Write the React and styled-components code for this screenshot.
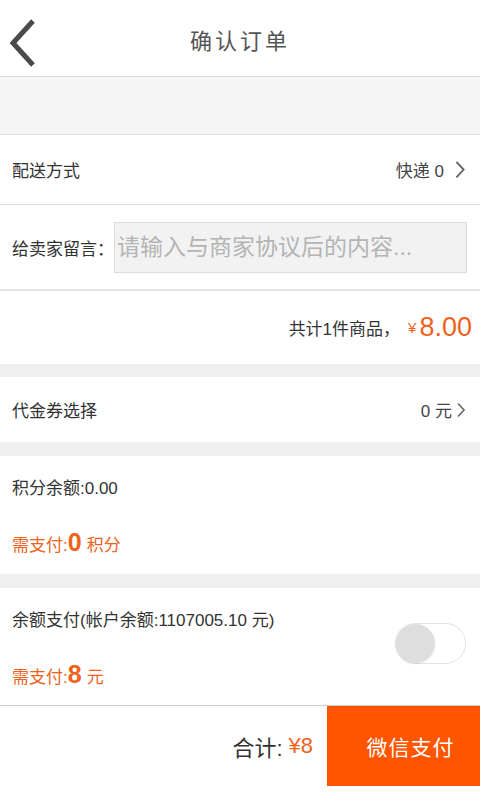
import React from 'react'
import styled, { createGlobalStyle } from 'styled-components'

const GlobalStyle = createGlobalStyle`
	html, body {
		margin: 0;
		padding: 0;
		background: #fff;
	}
	body {
		font-family: "Liberation Sans", "Noto Sans CJK SC", sans-serif;
		color: #333;
	}
`

const orange = '#ee621c'

const Page = styled.div`
	width: 480px;
	min-height: 800px;
	display: flex;
	flex-direction: column;
	background: #fff;
`

const Header = styled.div`
	height: 76px;
	display: flex;
	align-items: center;
	justify-content: center;
	position: relative;
	border-bottom: 1px solid #d6d6d6;
`

const Back = styled.svg`
	position: absolute;
	left: 8px;
	top: 18px;
`

const Title = styled.h1`
	margin: 0;
	font-size: 22px;
	font-weight: normal;
	color: #555;
	letter-spacing: 3px;
	padding-top: 2px;
`

const Blank = styled.div`
	height: 57px;
	background: #f5f5f5;
	border-bottom: 1px solid #ddd;
`

const Row = styled.div`
	height: ${(p) => p.h}px;
	display: flex;
	align-items: center;
	justify-content: ${(p) => (p.end ? 'flex-end' : 'space-between')};
	padding: 0 ${(p) => (p.pr != null ? p.pr : 14)}px 0 12px;
	border-bottom: ${(p) => p.line || 'none'};
	box-sizing: border-box;
	font-size: 17px;
	color: #333;
`

const Right = styled.div`
	display: flex;
	align-items: center;
	gap: ${(p) => p.gap || 8}px;
	color: #444;
`

const Label = styled.span`
	white-space: nowrap;
`

const Input = styled.input`
	width: 353px;
	height: 51px;
	box-sizing: border-box;
	border: 1px solid #dcdcdc;
	background: #f2f2f2;
	font-family: inherit;
	font-size: 23px;
	padding: 0 2px;
	outline: none;
	&::placeholder {
		color: #b4b4b4;
	}
`

const Gap = styled.div`
	height: ${(p) => p.h}px;
	background: #efefef;
`

const Yen = styled.span`
	color: ${orange};
	font-size: 15px;
	margin-left: 8px;
`

const Price = styled.span`
	color: ${orange};
	font-size: 27px;
	margin-left: 3px;
`

const Block = styled.div`
	height: ${(p) => p.h}px;
	padding: ${(p) => p.pt}px 14px 0 12px;
	box-sizing: border-box;
	display: flex;
	justify-content: space-between;
`

const Lines = styled.div`
	display: flex;
	flex-direction: column;
	gap: ${(p) => p.gap}px;
	font-size: 17px;
`

const Pay = styled.div`
	color: ${orange};
	display: flex;
	align-items: baseline;
`

const Big = styled.b`
	font-size: 25px;
	margin-right: 5px;
`

const Toggle = styled.div`
	width: 71px;
	height: 41px;
	box-sizing: border-box;
	border: 1px solid #e2e2e2;
	border-radius: 21px;
	margin-top: 17px;
	position: relative;
	background: #fff;
	&::after {
		content: '';
		position: absolute;
		left: 0;
		top: 0;
		width: 39px;
		height: 39px;
		border-radius: 50%;
		background: #dedede;
		box-shadow: 0 1px 2px rgba(0, 0, 0, 0.08);
	}
`

const Footer = styled.div`
	margin-top: auto;
	border-top: 1px solid #cfcfcf;
	height: 94px;
	display: flex;
	align-items: flex-start;
`

const Total = styled.div`
	flex: 1;
	height: 80px;
	display: flex;
	align-items: center;
	justify-content: flex-end;
	padding-right: 14px;
	font-size: 22px;
	color: #333;
`

const Sum = styled.span`
	color: ${orange};
	margin-left: 6px;
`

const Btn = styled.button`
	width: 153px;
	height: 80px;
	border: none;
	background: #ff5400;
	color: #fff;
	font-family: inherit;
	font-size: 21px;
	letter-spacing: 1px;
	padding: 0 0 0 14px;
`

const Chevron = ({ size = 12 }) => (
	<svg width={size} height={size * 1.6} viewBox="0 0 10 16">
		<polyline points="2,1.5 8,8 2,14.5" fill="none" stroke="#666" strokeWidth="1.6" />
	</svg>
)

export default function App() {
	return (
		<Page>
			<GlobalStyle />
			<Header>
				<Back width="30" height="50" viewBox="0 0 30 50">
					<polyline points="25,3 5,25 25,47" fill="none" stroke="#4a4a4a" strokeWidth="5" />
				</Back>
				<Title>确认订单</Title>
			</Header>
			<Blank />
			<Row h={70} line="1px solid #ddd">
				<Label>配送方式</Label>
				<Right gap={10}>
					<span>快递 0</span>
					<Chevron />
				</Right>
			</Row>
			<Row h={86} pr={13} line="2px solid #e3e3e3">
				<Label>给卖家留言：</Label>
				<Input placeholder="请输入与商家协议后的内容..." />
			</Row>
			<Row h={73} end pr={8}>
				<span>共计1件商品，</span>
				<Yen>¥</Yen>
				<Price>8.00</Price>
			</Row>
			<Gap h={13} />
			<Row h={65}>
				<Label>代金券选择</Label>
				<Right gap={4}>
					<span>0 元</span>
					<Chevron size={10} />
				</Right>
			</Row>
			<Gap h={14} />
			<Block h={118} pt={18}>
				<Lines gap={29}>
					<span>积分余额:0.00</span>
					<Pay>
						需支付:<Big>0</Big>积分
					</Pay>
				</Lines>
			</Block>
			<Gap h={14} />
			<Block h={117} pt={18}>
				<Lines gap={29}>
					<span>余额支付(帐户余额:1107005.10 元)</span>
					<Pay>
						需支付:<Big>8</Big>元
					</Pay>
				</Lines>
				<Toggle />
			</Block>
			<Footer>
				<Total>
					合计:<Sum>¥8</Sum>
				</Total>
				<Btn>微信支付</Btn>
			</Footer>
		</Page>
	)
}
